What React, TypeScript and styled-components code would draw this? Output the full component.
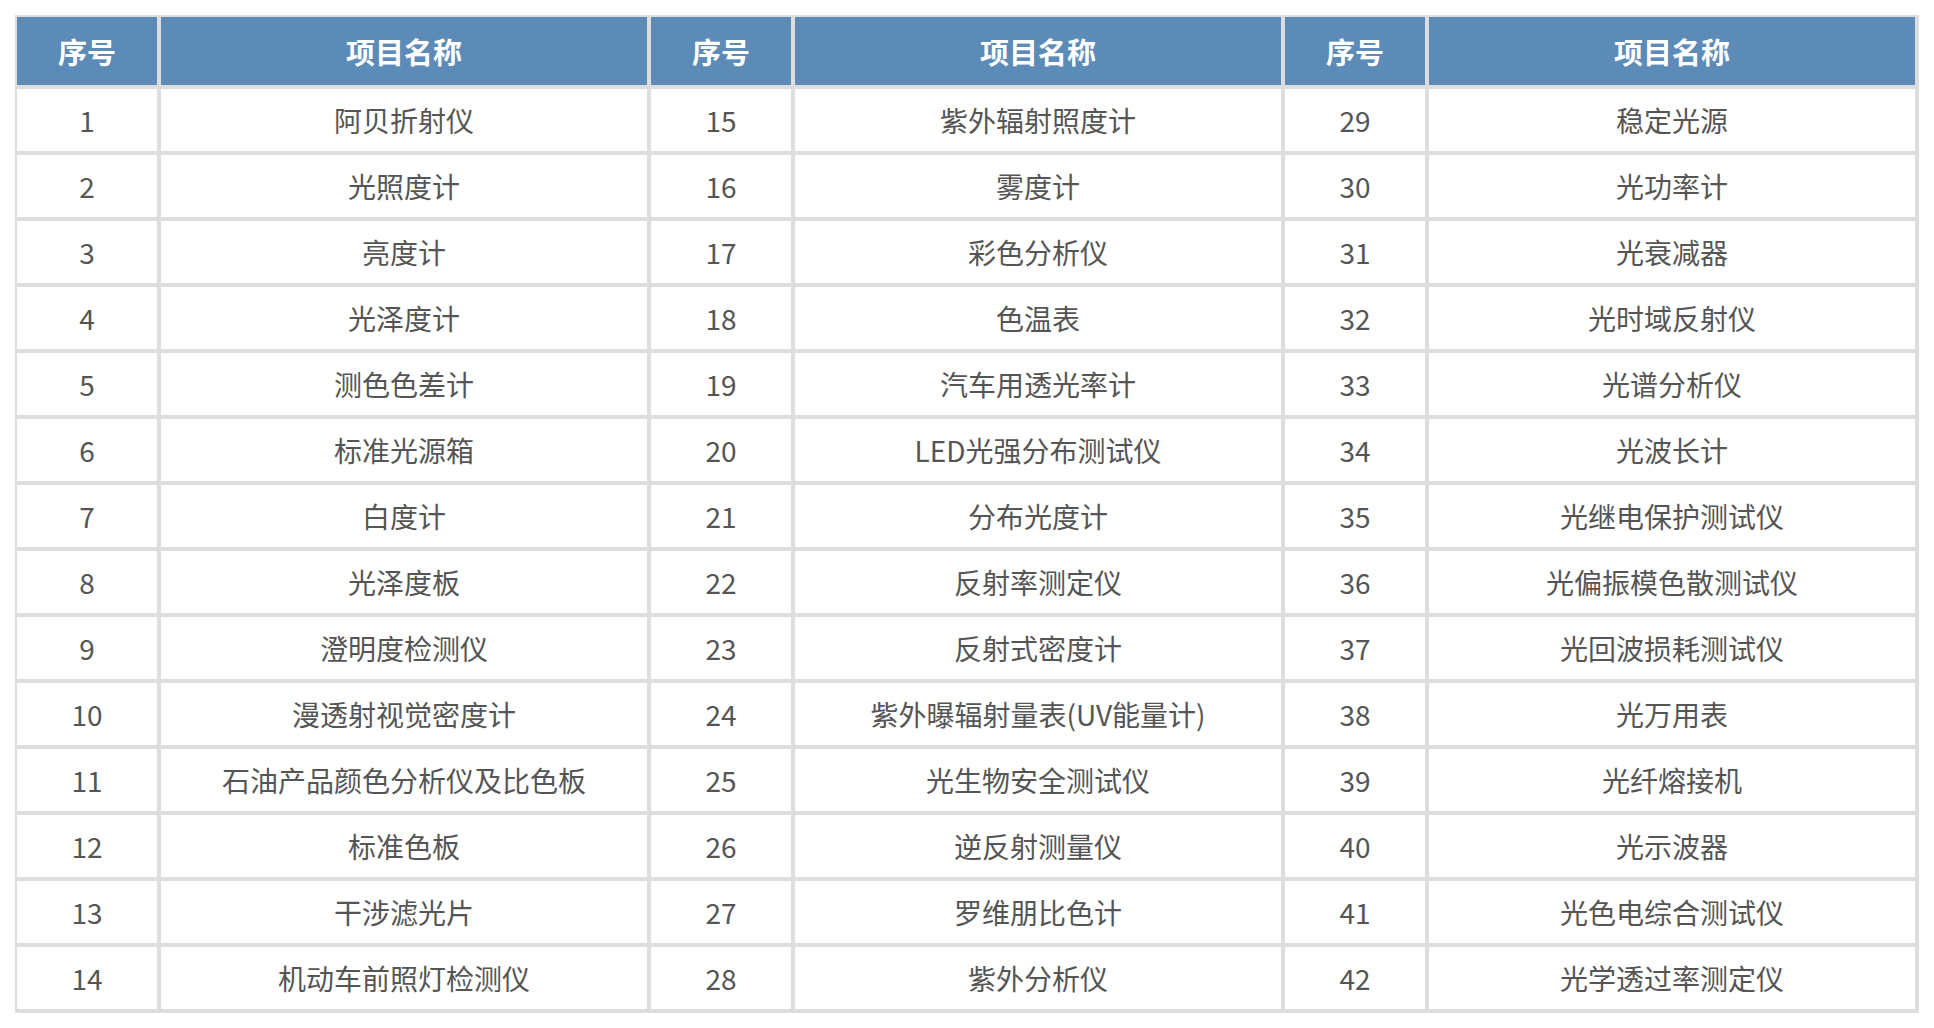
import React from "react";
import styled, { createGlobalStyle } from "styled-components";

const GlobalStyle = createGlobalStyle`
  html, body { margin: 0; padding: 0; background: #ffffff; }
  body { font-family: "Microsoft YaHei", "Noto Sans CJK SC", "Noto Sans", sans-serif; }
`;

const Page = styled.div`
  padding: 15px 0 0 15px;
`;

const Table = styled.table`
  border-collapse: separate;
  border-spacing: 0;
  border-top: 2px solid #dddddd;
  border-left: 2px solid #dddddd;
  table-layout: fixed;
`;

const HeadCell = styled.th<{ $wide?: boolean }>`
  width: ${(p) => (p.$wide ? 486 : 140)}px;
  height: 68px;
  padding: 0;
  background: #5b8bb6;
  color: #ffffff;
  font-size: 29px;
  font-weight: 700;
  text-align: center;
  vertical-align: middle;
  border-right: 4px solid #dddddd;
  border-bottom: 4px solid #dddddd;
`;

const Cell = styled.td`
  height: 62px;
  padding: 0;
  color: #555555;
  font-size: 28px;
  text-align: center;
  vertical-align: middle;
  white-space: nowrap;
  border-right: 4px solid #dddddd;
  border-bottom: 4px solid #dddddd;
`;

const items = [
  "阿贝折射仪", "光照度计", "亮度计", "光泽度计", "测色色差计", "标准光源箱", "白度计",
  "光泽度板", "澄明度检测仪", "漫透射视觉密度计", "石油产品颜色分析仪及比色板", "标准色板",
  "干涉滤光片", "机动车前照灯检测仪",
  "紫外辐射照度计", "雾度计", "彩色分析仪", "色温表", "汽车用透光率计", "LED光强分布测试仪",
  "分布光度计", "反射率测定仪", "反射式密度计", "紫外曝辐射量表(UV能量计)", "光生物安全测试仪",
  "逆反射测量仪", "罗维朋比色计", "紫外分析仪",
  "稳定光源", "光功率计", "光衰减器", "光时域反射仪", "光谱分析仪", "光波长计",
  "光继电保护测试仪", "光偏振模色散测试仪", "光回波损耗测试仪", "光万用表", "光纤熔接机",
  "光示波器", "光色电综合测试仪", "光学透过率测定仪",
];

const ROWS = 14;

export default function App() {
  return (
    <>
      <GlobalStyle />
      <Page>
        <Table>
          <thead>
            <tr>
              {[0, 1, 2].map((g) => (
                <React.Fragment key={g}>
                  <HeadCell>序号</HeadCell>
                  <HeadCell $wide>项目名称</HeadCell>
                </React.Fragment>
              ))}
            </tr>
          </thead>
          <tbody>
            {Array.from({ length: ROWS }).map((_, r) => (
              <tr key={r}>
                {[0, 1, 2].map((g) => {
                  const i = g * ROWS + r;
                  return (
                    <React.Fragment key={g}>
                      <Cell>{i + 1}</Cell>
                      <Cell>{items[i]}</Cell>
                    </React.Fragment>
                  );
                })}
              </tr>
            ))}
          </tbody>
        </Table>
      </Page>
    </>
  );
}
